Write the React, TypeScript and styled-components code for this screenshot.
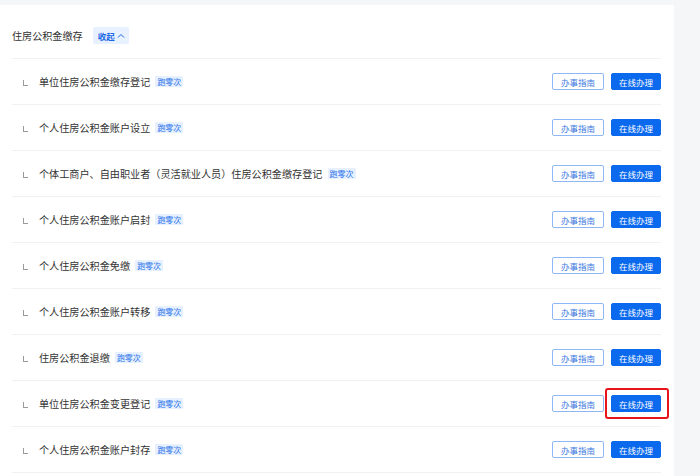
import React from "react";
import styled, { createGlobalStyle } from "styled-components";

const Global = createGlobalStyle`
  html, body { margin: 0; padding: 0; background: #f5f6f8; }
  body { font-family: "Noto Sans CJK SC", "Noto Sans", sans-serif; }
`;

const Page = styled.div`
  display: flex;
  width: 700px;
  height: 476px;
  overflow: hidden;
  padding-top: 5px;
  box-sizing: border-box;
  background: #f5f6f8;
`;

const Card = styled.div`
  width: 674px;
  flex: none;
  background: #fff;
  padding: 0 13px 0 12px;
  box-sizing: border-box;
`;

const Header = styled.div`
  display: flex;
  align-items: center;
  gap: 10px;
  padding: 22px 0 14px;
  border-bottom: 1px solid #f0f1f3;
  height: 17px;
`;

const Title = styled.span`
  font-size: 10.1px;
  color: #333;
  line-height: 17px;
`;

const Toggle = styled.span`
  display: inline-flex;
  align-items: center;
  gap: 2px;
  height: 17px;
  padding: 0 4px 0 5px;
  background: #e8f1ff;
  color: #1a66e6;
  font-size: 8.5px;
  font-weight: 700;
  border-radius: 2px;
`;

const Row = styled.div`
  display: flex;
  align-items: center;
  height: 45px;
  border-bottom: 1px solid #f0f1f3;
`;

const Corner = styled.span`
  width: 5px;
  height: 6px;
  margin: 2px 11px 0 11px;
  border-left: 1px solid #9a9a9a;
  border-bottom: 1px solid #9a9a9a;
  box-sizing: border-box;
`;

const Name = styled.span`
  font-size: 10.15px;
  color: #333;
  white-space: nowrap;
`;

const Badge = styled.span`
  margin-left: 5px;
  padding: 0 2px;
  height: 11px;
  line-height: 11px;
  font-size: 8px;
  color: #2b74ea;
  background: #e6f0ff;
  border-radius: 1px;
`;

const Actions = styled.div`
  margin-left: auto;
  display: flex;
  align-items: center;
  gap: 7px;
`;

const Button = styled.span<{ $primary?: boolean }>`
  position: relative;
  display: inline-flex;
  align-items: center;
  justify-content: center;
  box-sizing: border-box;
  height: 17px;
  width: ${(p) => (p.$primary ? "50px" : "52px")};
  font-size: 8.5px;
  border-radius: 2px;
  border: 1px solid ${(p) => (p.$primary ? "#0b69ee" : "#8fb7f5")};
  background: ${(p) => (p.$primary ? "#0b69ee" : "#fff")};
  color: ${(p) => (p.$primary ? "#fff" : "#3b78e0")};
`;

const Highlight = styled.span`
  position: absolute;
  left: -7px;
  right: -9px;
  top: -8px;
  bottom: -8px;
  border: 2px solid #e8141b;
  border-radius: 3px;
  pointer-events: none;
`;

const items = [
  "单位住房公积金缴存登记",
  "个人住房公积金账户设立",
  "个体工商户、自由职业者（灵活就业人员）住房公积金缴存登记",
  "个人住房公积金账户启封",
  "个人住房公积金免缴",
  "个人住房公积金账户转移",
  "住房公积金退缴",
  "单位住房公积金变更登记",
  "个人住房公积金账户封存",
];

export default function App() {
  return (
    <>
      <Global />
      <Page>
        <Card>
          <Header>
            <Title>住房公积金缴存</Title>
            <Toggle>
              收起
              <svg width="8" height="8" viewBox="0 0 8 8">
                <path d="M1 5.5 L4 2.5 L7 5.5" fill="none" stroke="#1a66e6" strokeWidth="1" />
              </svg>
            </Toggle>
          </Header>
          {items.map((name, i) => (
            <Row key={name}>
              <Corner />
              <Name>{name}</Name>
              <Badge>跑零次</Badge>
              <Actions>
                <Button>办事指南</Button>
                <Button $primary>
                  在线办理
                  {i === 7 && <Highlight />}
                </Button>
              </Actions>
            </Row>
          ))}
        </Card>
      </Page>
    </>
  );
}
